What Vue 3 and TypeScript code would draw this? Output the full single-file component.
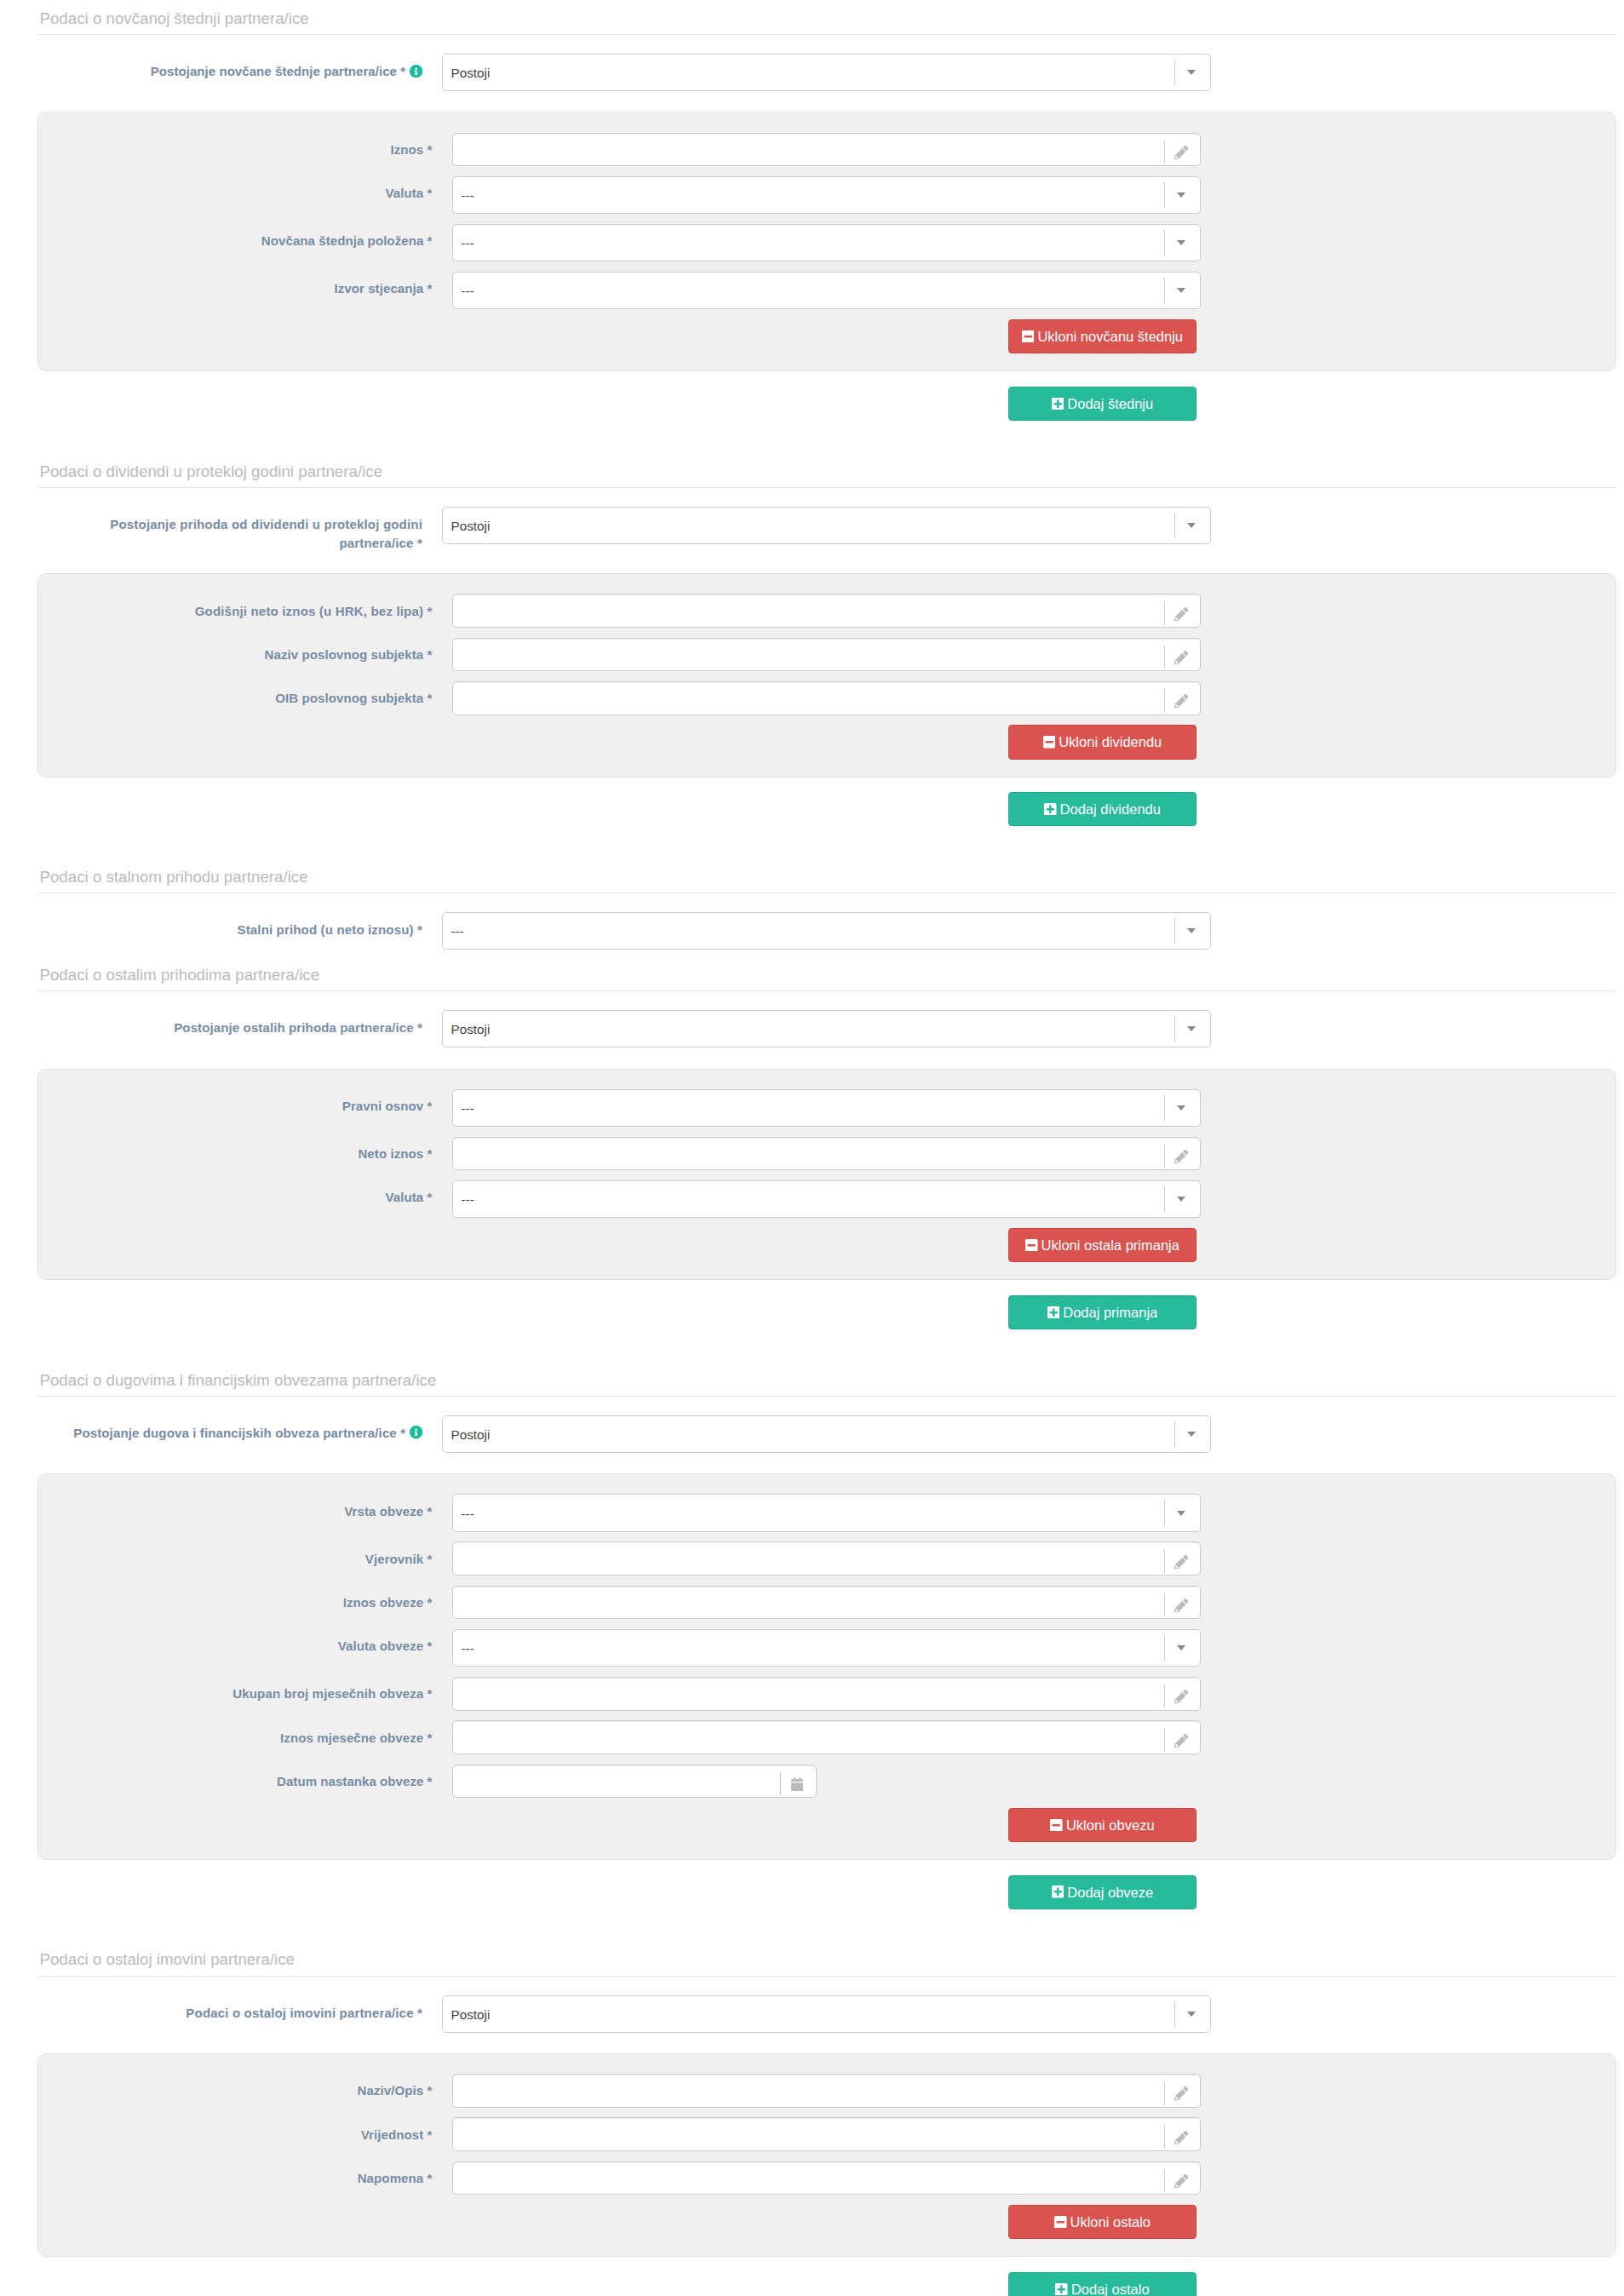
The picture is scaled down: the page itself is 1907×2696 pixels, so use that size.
<script setup lang="ts">
interface Field {
  label: string
  kind: 'text' | 'select' | 'date'
  tracking: number
}

interface Section {
  title: string
  label: string
  tracking: number
  info?: boolean
  value: string
  fields: Field[]
  remove?: string
  add?: string
}

const text = (label: string, tracking = 0.06): Field => ({ label, kind: 'text', tracking })
const select = (label: string, tracking = 0.06): Field => ({ label, kind: 'select', tracking })
const date = (label: string, tracking = 0.02): Field => ({ label, kind: 'date', tracking })

const sections: Section[] = [
  {
    title: 'Podaci o novčanoj štednji partnera/ice',
    label: 'Postojanje novčane štednje partnera/ice *',
    tracking: 0.02,
    info: true,
    value: 'Postoji',
    fields: [text('Iznos'), select('Valuta'), select('Novčana štednja položena', 0.04), select('Izvor stjecanja')],
    remove: 'Ukloni novčanu štednju',
    add: 'Dodaj štednju',
  },
  {
    title: 'Podaci o dividendi u protekloj godini partnera/ice',
    label: 'Postojanje prihoda od dividendi u protekloj godini partnera/ice *',
    tracking: 0.14,
    value: 'Postoji',
    fields: [text('Godišnji neto iznos (u HRK, bez lipa)', 0.14), text('Naziv poslovnog subjekta'), text('OIB poslovnog subjekta')],
    remove: 'Ukloni dividendu',
    add: 'Dodaj dividendu',
  },
  {
    title: 'Podaci o stalnom prihodu partnera/ice',
    label: 'Stalni prihod (u neto iznosu) *',
    tracking: 0.12,
    value: '---',
    fields: [],
  },
  {
    title: 'Podaci o ostalim prihodima partnera/ice',
    label: 'Postojanje ostalih prihoda partnera/ice *',
    tracking: 0.08,
    value: 'Postoji',
    fields: [select('Pravni osnov'), text('Neto iznos'), select('Valuta')],
    remove: 'Ukloni ostala primanja',
    add: 'Dodaj primanja',
  },
  {
    title: 'Podaci o dugovima i financijskim obvezama partnera/ice',
    label: 'Postojanje dugova i financijskih obveza partnera/ice *',
    tracking: 0.09,
    info: true,
    value: 'Postoji',
    fields: [
      select('Vrsta obveze'),
      text('Vjerovnik'),
      text('Iznos obveze'),
      select('Valuta obveze'),
      text('Ukupan broj mjesečnih obveza', 0.09),
      text('Iznos mjesečne obveze'),
      date('Datum nastanka obveze'),
    ],
    remove: 'Ukloni obvezu',
    add: 'Dodaj obveze',
  },
  {
    title: 'Podaci o ostaloj imovini partnera/ice',
    label: 'Podaci o ostaloj imovini partnera/ice *',
    tracking: 0.13,
    value: 'Postoji',
    fields: [text('Naziv/Opis'), text('Vrijednost'), text('Napomena')],
    remove: 'Ukloni ostalo',
    add: 'Dodaj ostalo',
  },
]
</script>

<template>
  <main class="page">
    <section v-for="s in sections" :key="s.title" class="section">
      <h2 class="title">{{ s.title }}</h2>

      <div class="row outer">
        <label class="label" :style="{ letterSpacing: s.tracking + 'px' }">{{ s.label }}<svg v-if="s.info" class="info" viewBox="8 8 496 496"><path d="M256 8C119.043 8 8 119.083 8 256c0 136.997 111.043 248 248 248s248-111.003 248-248C504 119.083 392.957 8 256 8zm0 110c23.196 0 42 18.804 42 42s-18.804 42-42 42-42-18.804-42-42 18.804-42 42-42zm56 254c0 6.627-5.373 12-12 12h-88c-6.627 0-12-5.373-12-12v-24c0-6.627 5.373-12 12-12h12v-64h-12c-6.627 0-12-5.373-12-12v-24c0-6.627 5.373-12 12-12h64c6.627 0 12 5.373 12 12v100h12c6.627 0 12 5.373 12 12v24z" /></svg></label>
        <div class="control select">
          <span class="value">{{ s.value }}</span>
          <span class="addon"><svg class="caret" viewBox="0 0 10 6"><path d="M0 0h10L5 6z" /></svg></span>
        </div>
      </div>

      <div v-if="s.fields.length" class="panel">
        <div v-for="f in s.fields" :key="f.label" class="row" :class="'row-' + f.kind">
          <label class="label" :style="{ letterSpacing: f.tracking + 'px' }">{{ f.label }} *</label>
          <div class="control" :class="f.kind">
            <span class="value">{{ f.kind === 'select' ? '---' : '' }}</span>
            <span class="addon">
              <svg v-if="f.kind === 'select'" class="caret" viewBox="0 0 10 6"><path d="M0 0h10L5 6z" /></svg>
              <svg v-else-if="f.kind === 'text'" class="pencil" viewBox="0 0 512 512"><path d="M497.9 142.1l-46.1 46.1c-4.7 4.7-12.3 4.7-17 0l-111-111c-4.7-4.7-4.7-12.3 0-17l46.1-46.1c18.7-18.7 49.1-18.7 67.9 0l60.1 60.1c18.8 18.7 18.8 49.1 0 67.9zM284.2 99.8L21.6 362.4.4 483.9c-2.9 16.4 11.4 30.6 27.8 27.8l121.5-21.3 262.6-262.6c4.7-4.7 4.7-12.3 0-17l-111-111c-4.8-4.7-12.4-4.7-17.1 0zM88 424h48v36.3l-64.5 11.3-31.1-31.1L51.7 376H88v48z" /></svg>
              <svg v-else class="calendar" viewBox="0 0 448 512"><path d="M12 192h424c6.6 0 12 5.4 12 12v260c0 26.5-21.5 48-48 48H48c-26.5 0-48-21.5-48-48V204c0-6.6 5.4-12 12-12zm436-44v-36c0-26.5-21.5-48-48-48h-48V12c0-6.6-5.4-12-12-12h-40c-6.6 0-12 5.4-12 12v52H160V12c0-6.6-5.4-12-12-12h-40c-6.6 0-12 5.4-12 12v52H48C21.5 64 0 85.5 0 112v36c0 6.6 5.4 12 12 12h424c6.6 0 12-5.4 12-12z" /></svg>
            </span>
          </div>
        </div>
        <button type="button" class="btn danger">
          <svg class="sq" viewBox="0 32 448 448"><path d="M400 32H48C21.5 32 0 53.5 0 80v352c0 26.5 21.5 48 48 48h352c26.5 0 48-21.5 48-48V80c0-26.5-21.5-48-48-48zM92 296c-6.6 0-12-5.4-12-12v-56c0-6.6 5.4-12 12-12h264c6.6 0 12 5.4 12 12v56c0 6.6-5.4 12-12 12H92z" fill-rule="evenodd" /></svg>
          <span>{{ s.remove }}</span>
        </button>
      </div>

      <button v-if="s.add" type="button" class="btn success">
        <svg class="sq" viewBox="0 32 448 448"><path d="M400 32H48C21.5 32 0 53.5 0 80v352c0 26.5 21.5 48 48 48h352c26.5 0 48-21.5 48-48V80c0-26.5-21.5-48-48-48zm-32 252c0 6.6-5.4 12-12 12h-92v92c0 6.6-5.4 12-12 12h-56c-6.6 0-12-5.4-12-12v-92H92c-6.6 0-12-5.4-12-12v-56c0-6.6 5.4-12 12-12h92v-92c0-6.6 5.4-12 12-12h56c6.6 0 12 5.4 12 12v92h92c6.6 0 12 5.4 12 12v56z" /></svg>
        <span>{{ s.add }}</span>
      </button>
    </section>
  </main>
</template>

<style>
body {
  margin: 0;
  background: #fefefe;
}
</style>

<style scoped>
.page {
  box-sizing: border-box;
  width: 1907px;
  height: 2696px;
  overflow: hidden;
  padding: 0 9px 0 44px;
  background: #fefefe;
  font-family: 'Liberation Sans', Arial, sans-serif;
  color: #444;
}
.section {
  display: flex;
  flex-direction: column;
}
.title {
  box-sizing: border-box;
  height: 41px;
  margin: 0;
  padding: 10.9px 3px 0 2.5px;
  border-bottom: 1px solid #e5e5e5;
  font-size: 18.65px;
  line-height: 22px;
  letter-spacing: 0.03px;
  font-weight: 400;
  color: #bbb;
}
.row {
  display: flex;
  align-items: flex-start;
}
.outer {
  margin: 22px 0 7.7px;
}
.label {
  box-sizing: border-box;
  flex: none;
  width: 462.5px;
  padding-top: 9.3px;
  font-size: 15.1px;
  line-height: 22.3px;
  font-weight: 700;
  text-align: right;
  color: #768ca5;
}
.outer .label {
  width: 452px;
  padding: 10px 0 0 25px;
}
.info {
  width: 15.4px;
  height: 15.4px;
  margin-left: 4.5px;
  vertical-align: -2px;
  fill: #1abc9c;
}
.control {
  box-sizing: border-box;
  flex: none;
  display: flex;
  width: 879px;
  height: 39.6px;
  margin-left: 23.5px;
  border: 1px solid #ccc;
  border-radius: 5px;
  background: #fff;
  box-shadow: inset 0 1px 1px rgba(0, 0, 0, 0.075);
}
.outer .control {
  width: 902.8px;
  margin-left: 23px;
}
.control.select {
  height: 44.4px;
  box-shadow: none;
}
.control.date {
  width: 427.8px;
}
.value {
  flex: 1;
  padding: 12.4px 0 0 9.5px;
  font-size: 15.3px;
  line-height: 20px;
}
.addon {
  box-sizing: border-box;
  flex: none;
  width: 41.8px;
  height: 27.4px;
  margin-top: 8px;
  padding: 6.3px 0 0 10.5px;
  border-left: 1px solid #ccc;
}
.select .addon {
  height: 30.4px;
  margin-top: 6px;
  padding: 12.3px 0 0 13.4px;
}
.outer .select .addon {
  padding-left: 14px;
}
.date .addon {
  padding-left: 11.5px;
}
.addon svg {
  display: block;
  fill: #bbb;
}
.addon .caret {
  width: 10px;
  height: 6px;
  fill: #888;
}
.addon .pencil {
  width: 16.4px;
  height: 16.4px;
}
.addon .calendar {
  width: 14.4px;
  height: 16.4px;
}
.panel {
  box-sizing: border-box;
  margin-top: 16.4px;
  padding: 23.2px 0 20px;
  border: 1px solid #e3e3e3;
  border-radius: 10px;
  background: #f0f0f0;
  display: flex;
  flex-direction: column;
}
.row-text,
.row-date {
  height: 51.3px;
}
.row-select {
  height: 56px;
}
.btn {
  box-sizing: border-box;
  display: flex;
  align-items: center;
  justify-content: center;
  gap: 4px;
  width: 221px;
  height: 40.2px;
  margin: 0 0 0 1139px;
  padding: 0;
  border: 1px solid;
  border-radius: 4px;
  font: 16.5px/20px 'Liberation Sans', Arial, sans-serif;
  color: #fff;
  white-space: nowrap;
}
.danger {
  background: #d9534f;
  border-color: #d43f3a;
}
.success {
  margin: 17.6px 0 37.7px 1140px;
  background: #27ba9b;
  border-color: #1fa88a;
}
.sq {
  flex: none;
  width: 14.5px;
  height: 14.5px;
  fill: #fff;
}
</style>
